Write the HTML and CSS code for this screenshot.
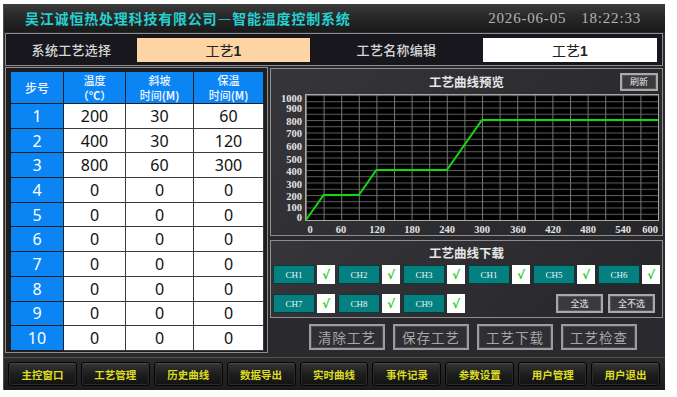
FILE: index.html
```html
<!DOCTYPE html>
<html lang="zh">
<head>
<meta charset="utf-8">
<title>智能温度控制系统</title>
<link rel="stylesheet" href="styles.css">
</head>
<body>
<div class="window">
  <header class="titlebar">
    <span class="title">吴江诚恒热处理科技有限公司—智能温度控制系统</span>
    <span class="clock"><span>2026-06-05</span><span>18:22:33</span></span>
  </header>

  <section class="selector">
    <span class="sel-label">系统工艺选择</span>
    <span class="sel-box peach">工艺<b>1</b></span>
    <span class="sel-label">工艺名称编辑</span>
    <span class="sel-box white">工艺<b>1</b></span>
  </section>

  <main class="main">
    <div class="table-panel">
      <table class="steps">
        <colgroup><col class="c1"><col class="c2"><col class="c3"><col class="c4"></colgroup>
        <thead>
          <tr>
            <th>步号</th>
            <th><span class="hl">温度</span><span class="hl unit">（°C）</span></th>
            <th><span class="hl">斜坡</span><span class="hl">时间<b>(M)</b></span></th>
            <th><span class="hl">保温</span><span class="hl">时间<b>(M)</b></span></th>
          </tr>
        </thead>
        <tbody>
          <tr><td class="no">1</td><td>200</td><td>30</td><td>60</td></tr>
          <tr><td class="no">2</td><td>400</td><td>30</td><td>120</td></tr>
          <tr><td class="no">3</td><td>800</td><td>60</td><td>300</td></tr>
          <tr><td class="no">4</td><td>0</td><td>0</td><td>0</td></tr>
          <tr><td class="no">5</td><td>0</td><td>0</td><td>0</td></tr>
          <tr><td class="no">6</td><td>0</td><td>0</td><td>0</td></tr>
          <tr><td class="no">7</td><td>0</td><td>0</td><td>0</td></tr>
          <tr><td class="no">8</td><td>0</td><td>0</td><td>0</td></tr>
          <tr><td class="no">9</td><td>0</td><td>0</td><td>0</td></tr>
          <tr><td class="no">10</td><td>0</td><td>0</td><td>0</td></tr>
        </tbody>
      </table>
    </div>

    <div class="right">
      <div class="panel chart">
        <div class="chart-head">
          <span class="panel-title">工艺曲线预览</span>
          <button class="small-btn refresh">刷新</button>
        </div>
        <svg class="plot" width="391" height="141" viewBox="0 0 391 141">
          <defs>
            <pattern id="grid" x="35" y="1" width="17.6" height="6.25" patternUnits="userSpaceOnUse">
              <line x1="0" y1="0.5" x2="17.6" y2="0.5" stroke="#5e5e5e" stroke-width="1"/>
              <line x1="0.5" y1="0" x2="0.5" y2="6.25" stroke="#767676" stroke-width="1"/>
            </pattern>
          </defs>
          <rect x="35" y="1" width="352" height="125" fill="#000"/>
          <rect x="35" y="1" width="352" height="125" fill="url(#grid)"/>
          <rect x="34.5" y="0.5" width="353" height="126" fill="none" stroke="#a8a8a8" stroke-width="1"/>
          <polyline points="35,126 52.6,101 87.8,101 105.4,76 175.8,76 211,26 387,26" fill="none" stroke="#12d812" stroke-width="2"/>
          <g class="ylab" text-anchor="end">
            <text x="31" y="8">1000</text>
            <text x="31" y="17.5">900</text>
            <text x="31" y="30.5">800</text>
            <text x="31" y="42.5">700</text>
            <text x="31" y="55.5">600</text>
            <text x="31" y="68.5">500</text>
            <text x="31" y="80.5">400</text>
            <text x="31" y="93.5">300</text>
            <text x="31" y="106">200</text>
            <text x="31" y="117">100</text>
            <text x="31" y="127">0</text>
          </g>
          <g class="xlab" text-anchor="middle">
            <text x="39" y="139">0</text>
            <text x="70" y="139">60</text>
            <text x="106" y="139">120</text>
            <text x="141" y="139">180</text>
            <text x="176" y="139">240</text>
            <text x="211" y="139">300</text>
            <text x="247" y="139">360</text>
            <text x="282" y="139">420</text>
            <text x="317" y="139">480</text>
            <text x="352" y="139">540</text>
            <text x="379" y="139">600</text>
          </g>
        </svg>
      </div>

      <div class="panel download">
        <div class="download-head"><span class="panel-title">工艺曲线下载</span></div>
        <div class="channels">
          <div class="ch"><span class="ch-name">CH1</span><span class="ch-check">√</span></div>
          <div class="ch"><span class="ch-name">CH2</span><span class="ch-check">√</span></div>
          <div class="ch"><span class="ch-name">CH3</span><span class="ch-check">√</span></div>
          <div class="ch"><span class="ch-name">CH1</span><span class="ch-check">√</span></div>
          <div class="ch"><span class="ch-name">CH5</span><span class="ch-check">√</span></div>
          <div class="ch"><span class="ch-name">CH6</span><span class="ch-check">√</span></div>
          <div class="ch"><span class="ch-name">CH7</span><span class="ch-check">√</span></div>
          <div class="ch"><span class="ch-name">CH8</span><span class="ch-check">√</span></div>
          <div class="ch"><span class="ch-name">CH9</span><span class="ch-check">√</span></div>
          <div class="select-btns">
            <button class="small-btn sel">全选</button>
            <button class="small-btn sel">全不选</button>
          </div>
        </div>
      </div>

      <div class="actions">
        <button class="act-btn">清除工艺</button>
        <button class="act-btn">保存工艺</button>
        <button class="act-btn">工艺下载</button>
        <button class="act-btn">工艺检查</button>
      </div>
    </div>
  </main>

  <nav class="navbar">
    <button class="nav-btn">主控窗口</button>
    <button class="nav-btn">工艺管理</button>
    <button class="nav-btn">历史曲线</button>
    <button class="nav-btn">数据导出</button>
    <button class="nav-btn">实时曲线</button>
    <button class="nav-btn">事件记录</button>
    <button class="nav-btn">参数设置</button>
    <button class="nav-btn">用户管理</button>
    <button class="nav-btn">用户退出</button>
  </nav>
</div>
</body>
</html>
```

FILE: styles.css
```css
* { box-sizing: border-box; margin: 0; padding: 0; }

body {
  background: #ffffff;
  font-family: "Noto Sans CJK SC", "Noto Sans", sans-serif;
}

button { font-family: inherit; cursor: pointer; }

.window {
  width: 662px;
  height: 386px;
  margin: 4px 0 0 3px;
  background: #2a2a2e;
  border-left: 1px solid #4c4c4c;
  display: flex;
  flex-direction: column;
}

/* title bar */
.titlebar {
  height: 28px;
  display: flex;
  align-items: center;
  justify-content: space-between;
  padding: 0 24px 0 21px;
  background: linear-gradient(#3c3c3c, #282828 45%, #1a1a1a);
}
.title {
  color: #26d0d0;
  font-size: 14px;
  font-weight: 700;
  letter-spacing: 0.8px;
}
.clock {
  display: flex;
  gap: 15px;
  font-family: "Liberation Serif", serif;
  font-size: 15px;
  letter-spacing: 0.8px;
  color: #b4b4b4;
}

/* selector row */
.selector {
  height: 33px;
  margin: 1px 2px 0 1px;
  border: 1px solid #8e8e8e;
  background: #17171d;
  display: grid;
  grid-template-columns: 131px 173px 173px 174px;
  align-items: center;
}
.sel-label {
  text-align: center;
  color: #d6d6d6;
  font-size: 13px;
  font-weight: 500;
  letter-spacing: 0.3px;
}
.sel-box {
  height: 24px;
  line-height: 24px;
  text-align: center;
  font-size: 14px;
  color: #222;
}
.sel-box b { font-family: "Liberation Sans", sans-serif; font-weight: 700; }
.peach { background: #fdd4a4; }
.white { background: #ffffff; }

/* main area */
.main {
  height: 291px;
  display: flex;
  padding: 1px 0 0 1px;
}

.table-panel {
  width: 263px;
  height: 286px;
  border: 1px solid #8e8e8e;
  background: #1d1d22;
  padding: 3px 4px 2px 4px;
}
.steps {
  width: 253px;
  height: 279px;
  border-collapse: collapse;
  table-layout: fixed;
  background: #ffffff;
}
.steps col.c1 { width: 53px; }
.steps col.c2 { width: 62px; }
.steps col.c3 { width: 68px; }
.steps col.c4 { width: 70px; }
.steps th {
  height: 32px;
  background: #0b84f4;
  color: #eef4ff;
  font-size: 12px;
  font-weight: 500;
  line-height: 15px;
  border: 1px solid #1e1e1e;
}
.steps th .hl {
  display: block;
  height: 15px;
  line-height: 15px;
  font-size: 11px;
}
.steps th b, .steps th .unit { font-weight: 700; }
.steps td {
  height: 24.7px;
  border: 1px solid #3a3a3a;
  text-align: center;
  font-family: "Noto Sans", sans-serif;
  font-size: 16px;
  color: #111;
  line-height: 20px;
}
.steps td.no {
  background: #0b84f4;
  color: #ffffff;
  border-color: #1e1e1e;
}

/* right column */
.right {
  width: 393px;
  margin-left: 2px;
  display: flex;
  flex-direction: column;
}
.panel {
  border: 1px solid #8e8e8e;
  background: linear-gradient(135deg, #35353a, #25252a);
}
.chart {
  height: 168px;
  margin-top: 1px;
}
.chart-head {
  height: 25px;
  display: grid;
  grid-template-columns: 1fr auto 1fr;
  align-items: center;
}
.panel-title {
  grid-column: 2;
  color: #e6e6e6;
  font-size: 12.5px;
  font-weight: 700;
}
.small-btn {
  height: 18px;
  background: #3a3a3e;
  border: 2px solid #a9a9a9;
  box-shadow: inset 0 0 0 1px #555;
  color: #e8e8e8;
  font-size: 9px;
}
.refresh {
  grid-column: 3;
  justify-self: end;
  width: 38px;
  margin-right: 4px;
}
.plot { display: block; overflow: visible; }
.plot text {
  font-family: "Liberation Serif", serif;
  font-weight: 700;
  font-size: 10.5px;
  fill: #e4e4e4;
}

.download {
  height: 78px;
  margin-top: 4px;
}
.download-head {
  height: 22px;
  display: grid;
  grid-template-columns: 1fr auto 1fr;
  align-items: center;
}
.channels {
  margin-top: 2px;
  padding-left: 2px;
  display: grid;
  grid-template-columns: repeat(6, 62px);
  column-gap: 3px;
  row-gap: 10px;
}
.ch {
  display: flex;
  gap: 2px;
  height: 19px;
}
.ch-name {
  width: 42px;
  background: #03807f;
  border: 1px solid #0c3a3a;
  color: #eaf6f6;
  font-family: "Liberation Serif", serif;
  font-size: 9px;
  display: flex;
  align-items: center;
  justify-content: center;
}
.ch-check {
  width: 18px;
  background: #ffffff;
  color: #22cc22;
  font-family: "DejaVu Sans", sans-serif;
  font-size: 12px;
  font-weight: 700;
  display: flex;
  align-items: center;
  justify-content: center;
}
.select-btns {
  grid-column: 5 / span 2;
  display: flex;
  justify-content: flex-end;
  gap: 5px;
  padding-right: 5px;
}
.sel { width: 47px; height: 19px; }

.actions {
  margin-top: 6px;
  height: 26px;
  display: flex;
  gap: 8px;
  padding-left: 39px;
}
.act-btn {
  width: 76px;
  height: 26px;
  background: #2f2f33;
  border: 2px solid #9c9c9c;
  box-shadow: inset 0 0 0 1px #4a4a4a;
  color: #a6a6a6;
  font-size: 13.5px;
  letter-spacing: 1px;
}

/* bottom navigation */
.navbar {
  height: 33px;
  display: flex;
  gap: 4px;
  padding: 4px 5px 4px 4px;
  background: linear-gradient(#2c2c2c, #1b1b1b);
  border-top: 1px solid #525252;
}
.nav-btn {
  flex: 1;
  height: 24px;
  background: linear-gradient(#363636, #1e1e1e 50%, #121212);
  border: 1px solid #050505;
  border-radius: 3px;
  box-shadow: inset 0 1px 0 #4a4a4a, inset 0 0 0 1px #2a2a2a;
  color: #dcdc22;
  font-size: 10.5px;
  font-weight: 700;
}
```
